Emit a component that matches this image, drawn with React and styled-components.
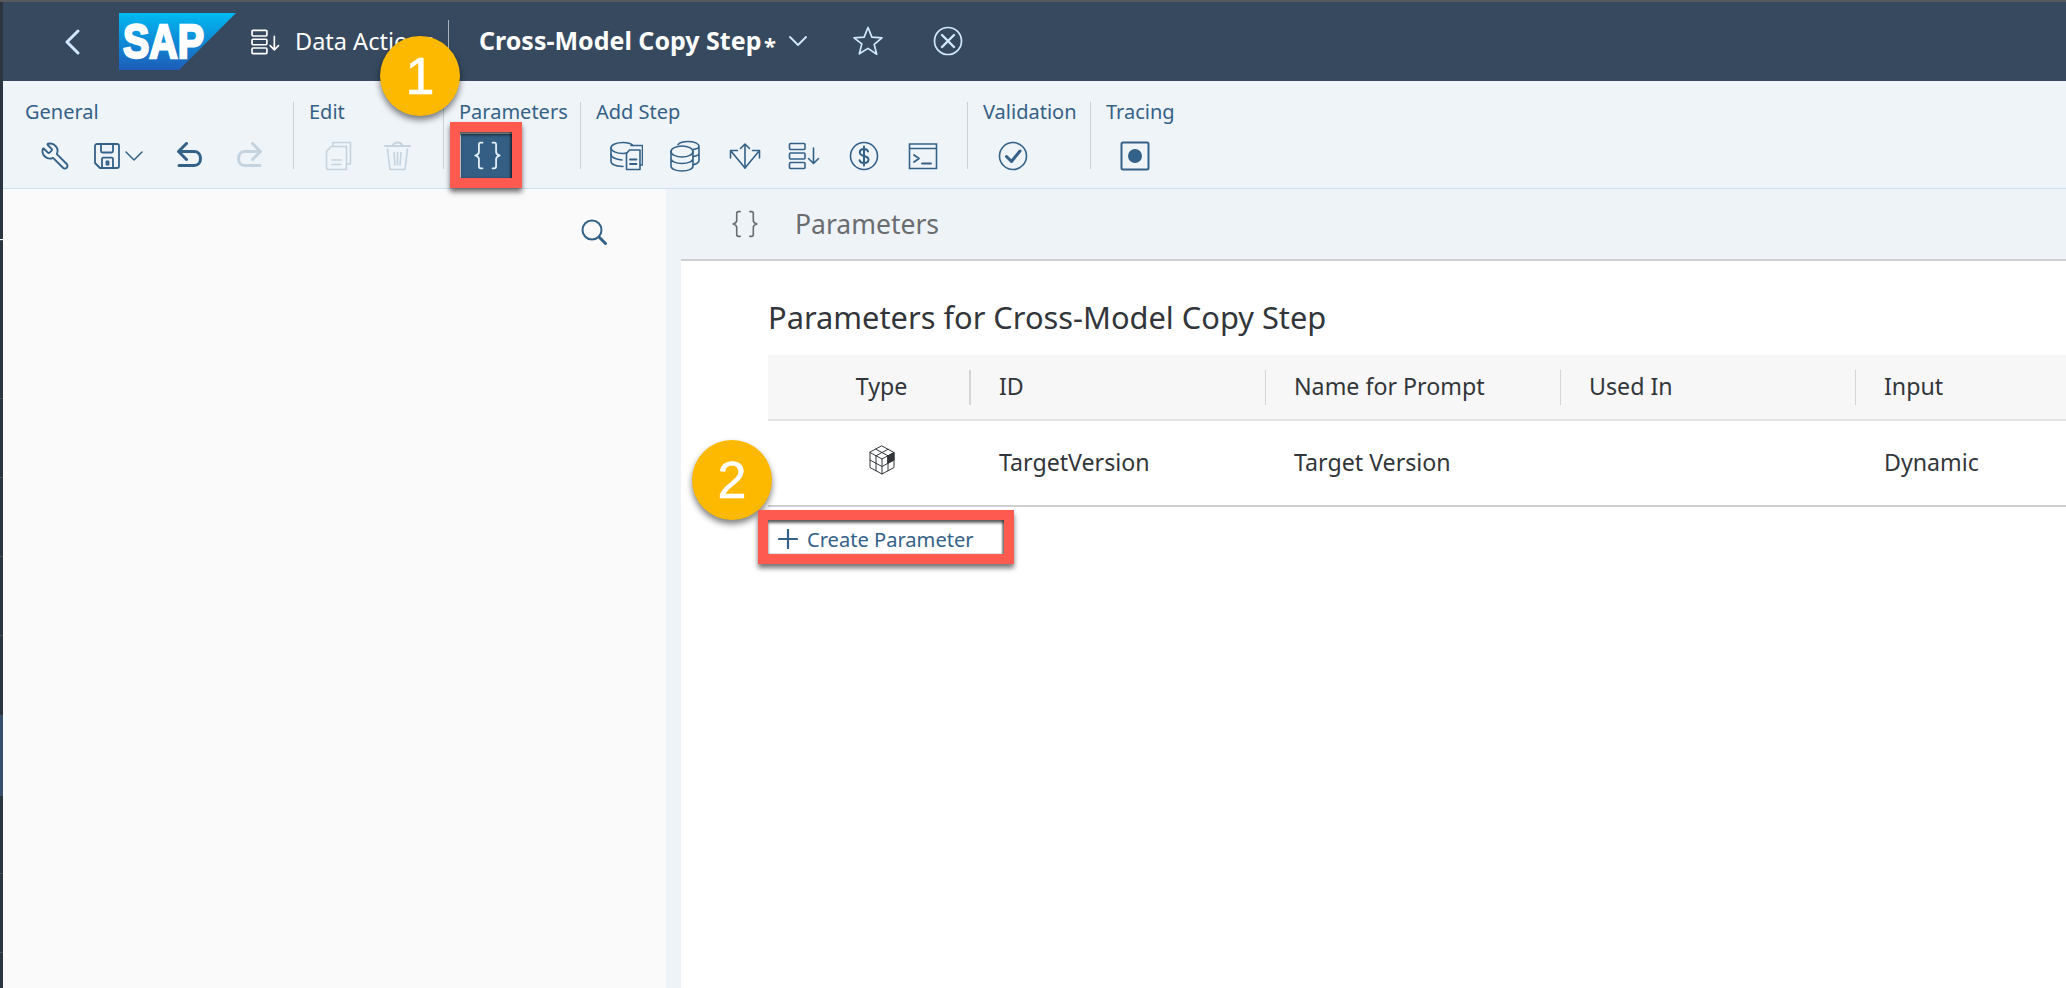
import React from "react";
import styled, { createGlobalStyle } from "styled-components";
import { Wrench } from "lucide-react";

const Global = createGlobalStyle`
  html, body { margin: 0; padding: 0; background: #fff; }
  body { font-family: "Noto Sans", "Open Sans", sans-serif; overflow: hidden; }
  * { box-sizing: border-box; }
`;

const Page = styled.div`
  position: relative; width: 2066px; height: 988px; overflow: hidden;
  display: flex; flex-direction: column;
`;
const TopStrip = styled.div`height: 2px; flex: none; background: #58595b;`;
const Frame = styled.div`flex: 1; display: flex; min-height: 0;`;
const Rail = styled.div`width: 3px; flex: none; display: flex; flex-direction: column; background: #2b3540;`;
const RailSeg = styled.div`
  flex: none; height: ${p => p.$h}px; background: ${p => p.$bg || "#2b3540"};
  border-top: 1px solid ${p => p.$line || "#46525e"};
`;
const Main = styled.div`flex: 1; min-width: 0; display: flex; flex-direction: column;`;

const Header = styled.header`
  height: 79px; flex: none; background: #36495e; display: flex; align-items: center; color: #fff;
`;
const HeaderIcon = styled.svg`
  flex: none; display: block; fill: none; stroke: ${p => p.$c || "#d1e8ff"}; stroke-width: ${p => p.$sw || 2};
  margin-left: ${p => p.$ml || 0}px; margin-top: ${p => p.$mt || 0}px; stroke-linecap: round; stroke-linejoin: round;
`;
const Crumb = styled.span`
  width: 153px; margin-left: 14px; font-size: 23.5px; white-space: nowrap; color: #fff; flex: none; margin-top: -2px;
`;
const HeaderDivider = styled.div`width: 1px; height: 42px; background: #a9b4be; flex: none; margin-top: -1px;`;
const Title = styled.span`
  margin-left: 30px; width: 281px; flex: none; font-size: 25px; font-weight: 700; white-space: nowrap; color: #fff; margin-top: -3px;
`;
const Dirty = styled.span`
  flex: none; width: 10px; margin-left: 4px; margin-top: 7px; font-size: 22px; font-weight: 700; line-height: 1; color: #fff;
`;

const Toolbar = styled.div`
  height: 108px; flex: none; background: #eff4f9; border-bottom: 1px solid #d1e0ef;
  display: flex; align-items: flex-start; padding-top: 21px;
`;
const Group = styled.section`
  flex: none; width: ${p => p.$w}px; height: 67px;
  padding-left: ${p => (p.$first ? 22 : 15)}px;
  border-left: ${p => (p.$first ? "none" : "1px solid #cbd0d5")};
`;
const GroupLabel = styled.div`
  height: 22px; line-height: 20px; font-size: 20px; color: #346187; white-space: nowrap;
`;
const ToolRow = styled.div`display: flex; margin-top: 10px;`;
const ToolButton = styled.button`
  flex: none; width: ${p => p.$w || 59}px; height: 45px; padding: 0 0 2px; border: none; outline: none;
  margin-left: ${p => p.$ml || 0}px; background: ${p => (p.$active ? "#345e83" : "transparent")};
  display: flex; align-items: center; justify-content: center;
  color: ${p => (p.$active ? "#e4f0fc" : p.$off ? "#c5d3df" : "#346187")};
`;
const SaveButton = styled(ToolButton)`justify-content: flex-start; padding-left: 9px; gap: 5px;`;
const Ico = styled.svg`
  display: block; flex: none; fill: none; stroke: currentColor; stroke-width: ${p => p.$sw || 1.6};
  stroke-linecap: round; stroke-linejoin: round;
`;
const FlipWrench = styled(Wrench)`transform: scaleX(-1); display: block;`;

const Workspace = styled.div`flex: 1; min-height: 0; display: flex;`;
const LeftPanel = styled.aside`
  width: 663px; flex: none; background: #fafafa; display: flex; justify-content: flex-end;
  padding: 30px 59px 0 0; align-items: flex-start; color: #346187;
`;
const RightPanel = styled.main`
  flex: 1; min-width: 0; background: #eef3f8; padding-left: 15px; display: flex; flex-direction: column;
`;
const PanelHeader = styled.div`
  height: 72px; flex: none; border-bottom: 2px solid #cdcfd2; display: flex; align-items: center;
  padding-left: 50px; color: #6a6d70;
`;
const PanelTitle = styled.span`margin-left: 36px; font-size: 26.5px; color: #6a6d70;`;
const Content = styled.div`flex: 1; background: #fff; padding: 36px 0 0 87px;`;
const Heading = styled.h2`
  margin: 0 0 18px; font-weight: 400; font-size: 30.8px; line-height: 40px; color: #32363a; white-space: nowrap;
`;
const TableRow = styled.div`
  display: grid; grid-template-columns: 202px 295px 295px 295px 1fr; align-items: center;
  height: ${p => p.$h}px; background: ${p => p.$bg || "#fff"}; border-bottom: 2px solid ${p => p.$line};
`;
const HeadCell = styled.div`
  height: 35px; display: flex; align-items: center; font-size: 23.2px; color: #32363a; white-space: nowrap;
  padding: 0 0 2px 28px; border-left: 1px solid ${p => (p.$first ? "transparent" : "#d5d5d5")};
  ${p => p.$first && "justify-content: center; padding-left: 26px; border-left: none; border-right: 1px solid #d5d5d5;"}
`;
const Cell = styled.div`
  display: flex; align-items: center; font-size: 23.2px; color: #32363a; white-space: nowrap; padding: 0 0 2px 29px;
  ${p => p.$first && "justify-content: center; padding-left: 26px; margin-top: -4px;"}
`;
const CreateLink = styled.a`
  display: inline-flex; align-items: center; gap: 9px; height: 30px; margin-top: 17px; padding-left: 10px;
  font-size: 20.1px; color: #346187; white-space: nowrap;
`;

const Callout = styled.div`
  position: absolute; left: ${p => p.$x}px; top: ${p => p.$y}px; width: 80px; height: 80px; border-radius: 50%;
  background: #fdb900; color: #fff; box-shadow: 0 4px 6px rgba(0,0,0,.5);
  display: flex; align-items: center; justify-content: center; -webkit-text-stroke: 0.5px #fff;
  font-family: "Liberation Sans", sans-serif; font-size: 52px; line-height: 1;
`;
const Highlight = styled.div`
  position: absolute; left: ${p => p.$x}px; top: ${p => p.$y}px; width: ${p => p.$w}px; height: ${p => p.$h}px;
  border: 10px solid #ff5a4f; box-shadow: 0 4px 5px rgba(0,0,0,.55), inset 0 3px 3px rgba(0,0,0,.6), inset -2px 0 2px rgba(0,0,0,.4);
  pointer-events: none;
`;

const DbDoc = () => (
  <Ico width="34" height="32" viewBox="0 0 34 32">
    <path d="M24 5.500C22 3.500 18 2.500 14 2.500 7.500 2.500 2 4.800 2 8v13.500c0 2.500 4 4.500 12 5" />
    <path d="M2 8c0 3 5.500 5.500 12 5.500 2 0 3-.2 5-.7M2 14.500c0 2.700 4.500 5 11 5.500" />
    <path d="M22 5.500h11.500V25H31" />
    <path d="M17.500 29.500V13.500l3-3.500h10.500v19.500z" fill="#eff4f9" />
    <path d="M21 19.500h6.500M21 24h6.500" strokeWidth="1.800" />
  </Ico>
);
const Db2 = () => (
  <Ico width="32" height="32" viewBox="0 0 32 32">
    <ellipse cx="13" cy="11.500" rx="11" ry="5.500" />
    <path d="M2 11.500v14.500c0 3 5 5 11 5s11-2 11-5V11.500M2 18.500c0 3 5 5 11 5s11-2 11-5" />
    <path d="M9 4.500C11 2.500 15 1.500 19 1.500c6 0 11 2 11 5v14c0 2-2 3.300-6 4.300M24 9.500c3-.5 6-1.500 6-3M24 16.500c3-.5 6-1.500 6-3" />
  </Ico>
);
const Arrows = () => (
  <Ico width="32" height="28" viewBox="0 0 32 28">
    <path d="M16 2v24M11.500 6.500 16 2l4.500 4.500" />
    <path d="M8.500 8.500h-7V16M1.500 8.500 16 26 30.500 8.500M23.500 8.500h7V16" />
  </Ico>
);
const ListDown = () => (
  <Ico width="32" height="28" viewBox="0 0 32 28">
    <rect x="1.500" y="1.500" width="15.500" height="6" rx="1" />
    <rect x="1.500" y="11" width="15.500" height="6" rx="1" />
    <rect x="1.500" y="20.500" width="15.500" height="6" rx="1" />
    <path d="M25.500 6v15M20.500 16.500l5 5 5-5" />
  </Ico>
);
const Dollar = () => (
  <Ico width="30" height="30" viewBox="0 0 30 30">
    <circle cx="15" cy="15" r="13.500" />
    <path d="M19 10.500c-.500-1.500-2-2.500-4-2.500-2.500 0-4.200 1.400-4.200 3.500 0 4.500 8.700 2.500 8.700 7 0 2.100-1.900 3.500-4.500 3.500-2.200 0-4-1.100-4.500-2.800M15 5.500v19" strokeWidth="2" />
  </Ico>
);
const Terminal = () => (
  <Ico width="30" height="28" viewBox="0 0 30 28">
    <path d="M1.500 2h27v24.500h-27zM1.500 6.500h27" strokeLinejoin="miter" />
    <path d="m6 13 5 3.500-5 3.500M14 21.500h9" strokeWidth="1.800" />
  </Ico>
);
const Undo = ({ flip }) => (
  <Ico width="27" height="27" viewBox="0 0 27 27" $sw="3" style={flip ? { transform: "scaleX(-1)" } : undefined}>
    <path d="M10.500 1.500 2.500 9.500l8 8M3 9.500h15c4.200 0 6.500 2.800 6.500 7s-2.300 7-6.500 7H3" />
  </Ico>
);
const Save = () => (
  <Ico width="26" height="26" viewBox="0 0 26 26" $sw="1.800">
    <path d="M3 1h20a2 2 0 0 1 2 2v20a2 2 0 0 1-2 2H6l-5-5V3a2 2 0 0 1 2-2z" />
    <path d="M7 1v7c0 1 .5 1.500 1.500 1.500h9c1 0 1.500-.5 1.500-1.500V1M8 25v-9c0-.8.500-1.300 1.300-1.300h8.400c.8 0 1.300.5 1.300 1.300v9" />
    <path d="M12.500 18.500h2v3h-2z" />
  </Ico>
);
const Chevron = () => (
  <Ico width="18" height="10" viewBox="0 0 18 10" $sw="1.500"><path d="m1 1 8 8 8-8" /></Ico>
);
const Copy = () => (
  <Ico width="27" height="30" viewBox="0 0 27 30">
    <path d="M8 5V1.500h17.500V23H22" />
    <path d="M1.500 10.500 6 5.500h15.500v23H3a1.500 1.500 0 0 1-1.500-1.500z" />
    <path d="M7 19h9M7 23.500h9" />
  </Ico>
);
const Trash = () => (
  <Ico width="27" height="30" viewBox="0 0 27 30">
    <path d="M1 5h25M9 5c0-3 2-3.500 4.500-3.500S18 2 18 5" strokeWidth="2" />
    <path d="M3.500 8 6 28.500h15L23.500 8M10 11.500 11 24M13.500 11.500V24M17 11.500 16 24" />
  </Ico>
);
const Braces = ({ size = 29, sw = 1.600 }) => (
  <Ico width={size} height={size} viewBox="0 0 26 26" $sw={sw}>
    <path d="M8.500 1.500H7c-1 0-1.700.7-1.700 1.800v6.500c0 1.400-1 2.500-3.300 3.200 2.300.7 3.300 1.800 3.300 3.200v6.500c0 1.100.7 1.800 1.700 1.800h1.500" />
    <path d="M17.500 1.500H19c1 0 1.700.7 1.700 1.800v6.500c0 1.400 1 2.500 3.300 3.200-2.300.7-3.300 1.800-3.300 3.200v6.500c0 1.100-.7 1.800-1.700 1.800h-1.500" />
  </Ico>
);
const CheckCircle = () => (
  <Ico width="30" height="30" viewBox="0 0 30 30">
    <circle cx="15" cy="15" r="13.500" />
    <path d="m8.500 15.500 5 5 8.500-10.500" strokeWidth="3" />
  </Ico>
);
const RecordBox = () => (
  <Ico width="30" height="30" viewBox="0 0 30 30" $sw="2">
    <rect x="1.500" y="1.500" width="27" height="27" rx="1.500" />
    <circle cx="15" cy="15" r="7" fill="currentColor" stroke="none" />
  </Ico>
);
const SearchIcon = () => (
  <Ico width="26" height="26" viewBox="0 0 26 26" $sw="2">
    <circle cx="11" cy="11" r="9.500" />
    <path d="m18 18 6.500 6.500" strokeWidth="3" />
  </Ico>
);
const Cube = () => (
  <Ico width="26" height="30" viewBox="0 0 26 30" $sw="1" style={{ color: "#32363a" }}>
    <path d="M13 1 25 7.500v15L13 29 1 22.500v-15z" />
    <path d="M1 7.500 13 14l12-6.500M13 14v15M7 4.300l12 6.500M19 4.300 7 10.800M1 15l12 6.500L25 15M7 10.800v15M19 10.800v15" />
    <path d="M19 10.800 25 7.500V15l-6 3.200z" fill="#32363a" />
  </Ico>
);
const SapLogo = () => (
  <svg width="117" height="57" viewBox="0 0 117 57" style={{ flex: "none", marginLeft: 39, display: "block" }}>
    <defs>
      <linearGradient id="sapG" x1="0" y1="0" x2="0" y2="1">
        <stop offset="0" stopColor="#00b9f2" />
        <stop offset="1" stopColor="#1e5cb9" />
      </linearGradient>
    </defs>
    <polygon points="0,0 117,0 60,57 0,57" fill="url(#sapG)" />
    <text x="4" y="45" fontFamily="Liberation Sans, sans-serif" fontWeight="700" fontSize="48" fill="#fff" stroke="#fff" strokeWidth="2.500" textLength="81" lengthAdjust="spacingAndGlyphs">SAP</text>
  </svg>
);

const railSegs = [
  { h: 186, line: "#2b3540" }, { h: 1, line: "#2b3540" }, { h: 50, line: "#2b3540" }, { h: 1, line: "#f5f5f5" },
  { h: 158 }, { h: 79 }, { h: 79 }, { h: 79 }, { h: 80 }, { h: 80, bg: "#364f6b" }, { h: 78 }, { h: 79 }, { h: 36 },
];
const columns = ["ID", "Name for Prompt", "Used In", "Input"];

export default function App() {
  return (
    <Page>
      <Global />
      <TopStrip />
      <Frame>
        <Rail>{railSegs.map((s, i) => <RailSeg key={i} $h={s.h} $bg={s.bg} $line={s.line} />)}</Rail>
        <Main>
          <Header>
            <HeaderIcon $ml={62} $sw={3} width="15" height="26" viewBox="0 0 15 26"><path d="M13 2 2 13l11 11" /></HeaderIcon>
            <SapLogo />
            <HeaderIcon $ml={14} $c="#fff" $sw={1.800} width="31" height="26" viewBox="0 0 32 28"><rect x="1.500" y="1.500" width="16" height="6" rx="1" /><rect x="1.500" y="11" width="16" height="6" rx="1" /><rect x="1.500" y="20.500" width="16" height="6" rx="1" /><path d="M25.500 8v14M21 18l4.500 4.500L30 18" /></HeaderIcon>
            <Crumb>Data Actions</Crumb>
            <HeaderDivider />
            <Title>Cross-Model Copy Step</Title>
            <Dirty>*</Dirty>
            <HeaderIcon $ml={15} $mt={-1} $sw={1.800} width="18" height="10" viewBox="0 0 18 10"><path d="m1 1 8 8 8-8" /></HeaderIcon>
            <HeaderIcon $ml={46} $mt={-2} $sw={1.700} width="30" height="29" viewBox="0 0 30 29"><path d="m15 1.500 3.900 9.600 10.100.7-7.800 6.600 2.500 9.900L15 22.400l-8.700 5.400 2.500-9.900L1 11.800l10.100-.7z" /></HeaderIcon>
            <HeaderIcon $ml={50} $mt={-2} $sw={1.700} width="30" height="30" viewBox="0 0 30 30"><circle cx="15" cy="15" r="13.500" /><path d="m9 9 12 12M21 9 9 21" strokeWidth="2.400" /></HeaderIcon>
          </Header>
          <Toolbar>
            <Group $first $w={290}>
              <GroupLabel>General</GroupLabel>
              <ToolRow>
                <ToolButton $w={60}><FlipWrench size={30} strokeWidth={1.500} /></ToolButton>
                <SaveButton $w={75}><Save /><Chevron /></SaveButton>
                <ToolButton $w={59}><Undo /></ToolButton>
                <ToolButton $w={60} $off><Undo flip /></ToolButton>
              </ToolRow>
            </Group>
            <Group $w={150}>
              <GroupLabel>Edit</GroupLabel>
              <ToolRow>
                <ToolButton $off><Copy /></ToolButton>
                <ToolButton $off><Trash /></ToolButton>
              </ToolRow>
            </Group>
            <Group $w={137}>
              <GroupLabel>Parameters</GroupLabel>
              <ToolRow><ToolButton $w={52} $ml={2} $active><Braces /></ToolButton></ToolRow>
            </Group>
            <Group $w={387}>
              <GroupLabel>Add Step</GroupLabel>
              <ToolRow>
                <ToolButton $w={59.500}><DbDoc /></ToolButton>
                <ToolButton $w={59.500}><Db2 /></ToolButton>
                <ToolButton $w={59.500}><Arrows /></ToolButton>
                <ToolButton $w={59.500}><ListDown /></ToolButton>
                <ToolButton $w={59.500}><Dollar /></ToolButton>
                <ToolButton $w={59.500}><Terminal /></ToolButton>
              </ToolRow>
            </Group>
            <Group $w={123}>
              <GroupLabel>Validation</GroupLabel>
              <ToolRow><ToolButton><CheckCircle /></ToolButton></ToolRow>
            </Group>
            <Group $w={140}>
              <GroupLabel>Tracing</GroupLabel>
              <ToolRow><ToolButton $w={58}><RecordBox /></ToolButton></ToolRow>
            </Group>
          </Toolbar>
          <Workspace>
            <LeftPanel><SearchIcon /></LeftPanel>
            <RightPanel>
              <PanelHeader>
                <Braces size={28} sw={1.500} />
                <PanelTitle>Parameters</PanelTitle>
              </PanelHeader>
              <Content>
                <Heading>Parameters for Cross-Model Copy Step</Heading>
                <TableRow $h={66} $bg="#f7f7f7" $line="#e5e5e5">
                  <HeadCell $first>Type</HeadCell>
                  {columns.map(c => <HeadCell key={c}>{c}</HeadCell>)}
                </TableRow>
                <TableRow $h={86} $line="#cfcfcf">
                  <Cell $first><Cube /></Cell>
                  <Cell>TargetVersion</Cell>
                  <Cell>Target Version</Cell>
                  <Cell />
                  <Cell>Dynamic</Cell>
                </TableRow>
                <CreateLink>
                  <Ico width="20" height="20" viewBox="0 0 20 20" $sw="2.200"><path d="M10 1v18M1 10h18" /></Ico>
                  Create Parameter
                </CreateLink>
              </Content>
            </RightPanel>
          </Workspace>
        </Main>
      </Frame>
      <Callout $x={380} $y={36}>1</Callout>
      <Highlight $x={450} $y={122} $w={72} $h={66} />
      <Callout $x={692} $y={440}>2</Callout>
      <Highlight $x={758} $y={510} $w={256} $h={54} />
    </Page>
  );
}
